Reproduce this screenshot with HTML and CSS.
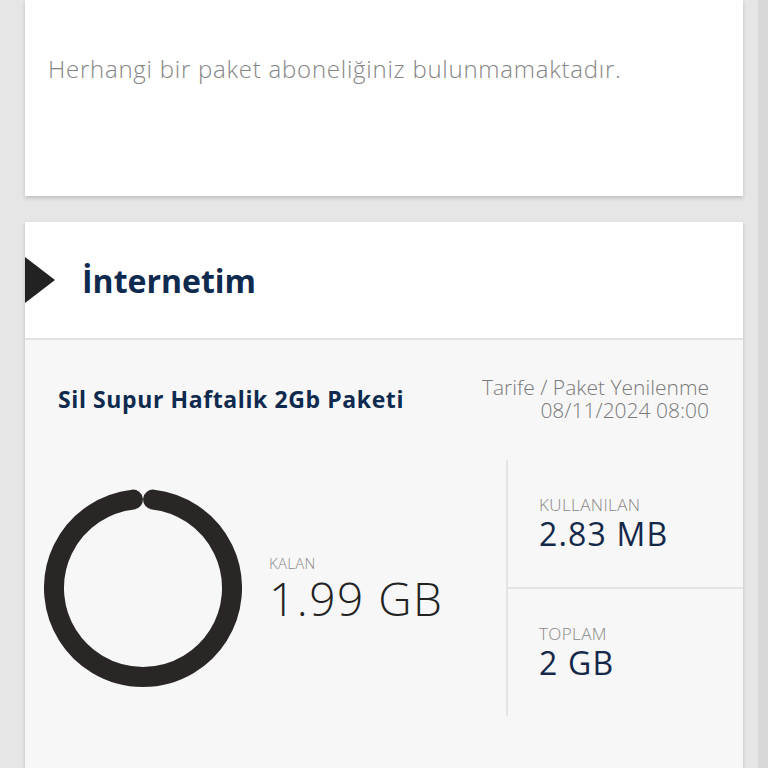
FILE: index.html
```html
<!DOCTYPE html>
<html lang="tr">
<head>
    <meta charset="UTF-8">
    <meta name="viewport" content="width=device-width, initial-scale=1.0">
    <title>Paketlerim</title>
    <link rel="stylesheet" href="styles.css">
</head>
<body>

    <div class="page">
        <div class="card empty">
            <p>Herhangi bir paket aboneliğiniz bulunmamaktadır.</p>
        </div>

        <div class="card">
            <div class="card-head">
                <span class="marker"></span>
                <h2>İnternetim</h2>
            </div>

            <div class="usage">
                <div class="usage-head">
                    <h3>Sil Supur Haftalik 2Gb Paketi</h3>
                    <div class="renew">
                        <div>Tarife / Paket Yenilenme</div>
                        <div>08/11/2024 08:00</div>
                    </div>
                </div>

                <div class="usage-stats">
                    <svg class="donut" width="198" height="198" viewBox="0 0 198 198">
                        <path d="M109.07 10.57 A89 89 0 1 1 88.93 10.57" fill="none" stroke="#2a2626" stroke-width="20" stroke-linecap="round"/>
                    </svg>
                    <div class="remaining">
                        <span class="label">KALAN</span>
                        <span class="big">1.99 GB</span>
                    </div>
                    <div class="totals">
                        <div class="total">
                            <span class="label">KULLANILAN</span>
                            <span class="value">2.83 MB</span>
                        </div>
                        <div class="total">
                            <span class="label">TOPLAM</span>
                            <span class="value">2 GB</span>
                        </div>
                    </div>
                </div>
            </div>
        </div>
    </div>
    <div class="scroll"></div>

</body>
</html>
```

FILE: styles.css
```css
/* Dasar */
body {
    margin: 0;
    display: flex;
    background: #e6e6e6;
    font-family: 'Open Sans', 'Liberation Sans', sans-serif;
    min-height: 768px;
}
.page { flex: 1; padding: 0 15px 0 25px; }
.scroll { width: 10px; background: #d8d8d8; }

.card { background: #fff; box-shadow: 0 2px 4px rgba(0, 0, 0, 0.18); }
.empty { height: 196px; margin-bottom: 26px; padding: 0 23px; box-sizing: border-box; overflow: hidden; }
.empty p { margin: 0; padding-top: 52px; font-size: 24px; font-weight: 300; letter-spacing: 0.75px; color: #858585; white-space: nowrap; }

.card-head { height: 116px; display: flex; align-items: center; border-bottom: 2px solid #e2e2e2; }
.marker { width: 0; height: 0; border-top: 23px solid transparent; border-bottom: 23px solid transparent; border-left: 30px solid #222; }
.card-head h2 { margin: 0 0 0 27px; font-size: 32px; font-weight: 700; color: #0e2a4e; }

.usage { background: #f7f7f7; padding-bottom: 60px; }
.usage-head { display: flex; justify-content: space-between; align-items: center; padding: 36px 34px 0 33px; }
.usage-head h3 { margin: 0; font-size: 23px; font-weight: 700; letter-spacing: 0.6px; color: #0e2a4e; }
.renew { text-align: right; font-size: 21px; font-weight: 300; line-height: 23px; color: #7a7a7a; }

.usage-stats { display: flex; align-items: center; margin-top: 38px; padding-left: 19px; height: 256px; }
.donut { flex: none; }
.remaining { display: flex; flex-direction: column; margin-left: 27px; padding-top: 2px; }
.label { font-size: 15px; font-weight: 300; color: #888; line-height: 18px; letter-spacing: 0.3px; }
.big { font-size: 46px; font-weight: 300; color: #222; line-height: 52px; letter-spacing: 1.5px; }

.totals { margin-left: auto; width: 235px; height: 100%; border-left: 2px solid #e4e4e4; display: flex; flex-direction: column; }
.total { flex: 1; display: flex; flex-direction: column; justify-content: center; padding-left: 31px; }
.total + .total { border-top: 2px solid #e4e4e4; }
.total .label { font-size: 17px; line-height: 20px; letter-spacing: 0.4px; }
.value { font-size: 32px; font-weight: 400; color: #14294a; line-height: 38px; letter-spacing: 1.2px; }
```
